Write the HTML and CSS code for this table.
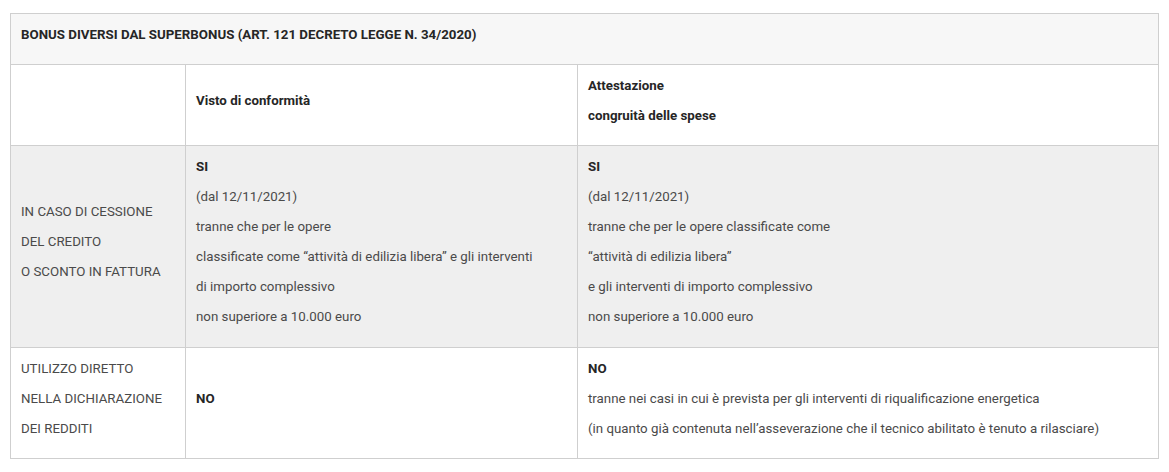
FILE: index.html
```html
<!DOCTYPE html>
<html lang="it">
<head>
<meta charset="utf-8">
<title>Bonus diversi dal Superbonus</title>
<link rel="stylesheet" href="styles.css">
</head>
<body>
<table class="bonus-table">
  <colgroup>
    <col class="col-label">
    <col class="col-visto">
    <col class="col-attest">
  </colgroup>
  <thead>
    <tr class="row-title">
      <th colspan="3"><p class="strong">BONUS DIVERSI DAL SUPERBONUS (ART. 121 DECRETO LEGGE N. 34/2020)</p></th>
    </tr>
  </thead>
  <tbody>
    <tr class="row-white">
      <td></td>
      <td><p class="strong">Visto di conformità</p></td>
      <td><p class="strong">Attestazione</p><p class="strong">congruità delle spese</p></td>
    </tr>
    <tr class="row-grey">
      <td><p>IN CASO DI CESSIONE</p><p>DEL CREDITO</p><p>O SCONTO IN FATTURA</p></td>
      <td>
        <p class="strong">SI</p>
        <p>(dal 12/11/2021)</p>
        <p>tranne che per le opere</p>
        <p>classificate come “attività di edilizia libera” e gli interventi</p>
        <p>di importo complessivo</p>
        <p>non superiore a 10.000 euro</p>
      </td>
      <td>
        <p class="strong">SI</p>
        <p>(dal 12/11/2021)</p>
        <p>tranne che per le opere classificate come</p>
        <p>“attività di edilizia libera”</p>
        <p>e gli interventi di importo complessivo</p>
        <p>non superiore a 10.000 euro</p>
      </td>
    </tr>
    <tr class="row-white">
      <td><p>UTILIZZO DIRETTO</p><p>NELLA DICHIARAZIONE</p><p>DEI REDDITI</p></td>
      <td><p class="strong">NO</p></td>
      <td>
        <p class="strong">NO</p>
        <p>tranne nei casi in cui è prevista per gli interventi di riqualificazione energetica</p>
        <p>(in quanto già contenuta nell’asseverazione che il tecnico abilitato è tenuto a rilasciare)</p>
      </td>
    </tr>
  </tbody>
</table>
</body>
</html>
```
FILE: styles.css
```css
html, body {
  background: #ffffff;
}
body {
  margin: 0;
  padding: 13px 11px 0 10px;
  font-family: Roboto, "Liberation Sans", sans-serif;
  font-size: 13.3px;
  color: #4a4a4a;
}
.bonus-table {
  width: 1148px;
  border-collapse: collapse;
  table-layout: fixed;
  border: 1px solid #cfcfcf;
}
.col-label { width: 175px; }
.col-visto { width: 392px; }
.col-attest { width: 581px; }
.bonus-table th,
.bonus-table td {
  border: 1px solid #cfcfcf;
  padding: 11px 10px 9px 10px;
  vertical-align: middle;
  text-align: left;
  font-weight: normal;
}
.row-grey td {
  padding-bottom: 10px;
}
.bonus-table p {
  margin: 0 0 10px 0;
  line-height: 20px;
}
.bonus-table .strong {
  font-weight: bold;
  color: #262626;
}
.row-title th {
  background: #f7f7f7;
}
.row-white td {
  background: #ffffff;
}
.row-grey td {
  background: #efefef;
}
```
